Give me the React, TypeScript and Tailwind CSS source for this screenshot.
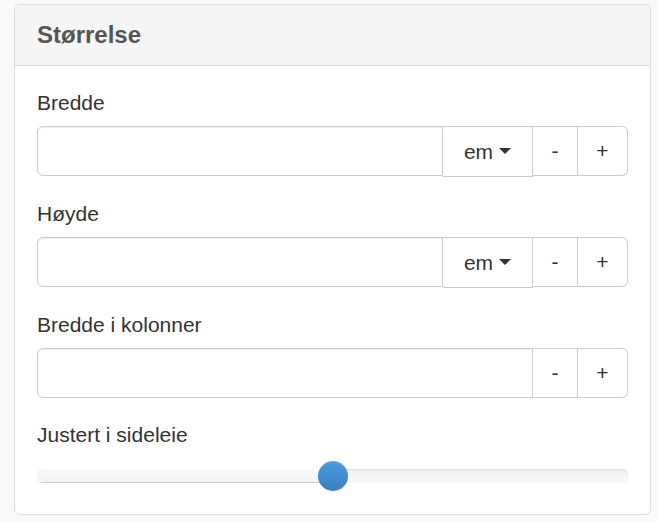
import React from "react";

function Caret() {
  return (
    <span className="inline-block ml-[6px] align-middle w-0 h-0 border-t-[6px] border-t-[#333] border-x-[6px] border-x-transparent relative top-[-1px]" />
  );
}

function InputRow({ unit }: { unit?: boolean }) {
  return (
    <div className="flex h-[50px] w-full">
      <input
        className={
          "flex-1 min-w-0 h-full border border-[#ccc] rounded-l-[6px] bg-white px-[18px] text-[21px] text-[#555] outline-none shadow-[inset_0_1px_1px_rgba(0,0,0,0.075)]"
        }
      />
      {unit && (
        <button className="w-[90px] h-[51px] border border-l-0 border-[#ccc] bg-white text-[21px] text-[#333] flex items-center justify-center">
          em
          <Caret />
        </button>
      )}
      <button className="w-[45px] h-full border border-l-0 border-[#ccc] bg-white text-[21px] text-[#333] flex items-center justify-center">
        -
      </button>
      <button className="w-[50px] h-full border border-l-0 border-[#ccc] rounded-r-[6px] bg-white text-[21px] text-[#333] flex items-center justify-center">
        +
      </button>
    </div>
  );
}

export default function App() {
  return (
    <div
      className="w-[658px] h-[522px] bg-[#f9f9f9] pt-[4px] pl-[14px] pr-[7px]"
      style={{ fontFamily: '"Liberation Sans", Arial, sans-serif' }}
    >
      <div className="w-[637px] h-[511px] bg-white border border-[#ddd] rounded-[6px] overflow-hidden flex flex-col">
        <div className="h-[61px] bg-[#f5f5f5] border-b border-[#ddd] px-[22px] flex items-center">
          <h3 className="text-[24px] font-bold text-[#555] leading-none">Størrelse</h3>
        </div>
        <div className="px-[22px] pt-[22px]">
          <div className="mb-[23px]">
            <label className="block h-[30px] leading-[30px] text-[21px] text-[#333] mb-[8px]">Bredde</label>
            <InputRow unit />
          </div>
          <div className="mb-[23px]">
            <label className="block h-[30px] leading-[30px] text-[21px] text-[#333] mb-[8px]">Høyde</label>
            <InputRow unit />
          </div>
          <div className="mb-[22px]">
            <label className="block h-[30px] leading-[30px] text-[21px] text-[#333] mb-[8px]">Bredde i kolonner</label>
            <InputRow />
          </div>
          <div>
            <label className="block h-[30px] leading-[30px] text-[21px] text-[#333]">Justert i sideleie</label>
            <div className="relative h-[44px] w-full">
              <div className="absolute left-0 right-0 top-[19px] h-[14px] rounded-[6px] bg-gradient-to-b from-[#f3f3f3] to-[#f8f8f8] shadow-[inset_0_1px_2px_rgba(0,0,0,0.1)] overflow-hidden">
                <div className="h-full w-1/2 bg-gradient-to-b from-[#f9f9f9] to-[#f3f3f3] shadow-[inset_0_-1px_0_rgba(0,0,0,0.15)]" />
              </div>
              <div className="absolute left-1/2 top-[11px] -ml-[15px] w-[30px] h-[30px] rounded-full bg-gradient-to-b from-[#4b9bda] to-[#3a7fc1] shadow-[inset_0_1px_0_rgba(255,255,255,0.2),0_1px_2px_rgba(0,0,0,0.05)]" />
            </div>
          </div>
        </div>
      </div>
    </div>
  );
}
